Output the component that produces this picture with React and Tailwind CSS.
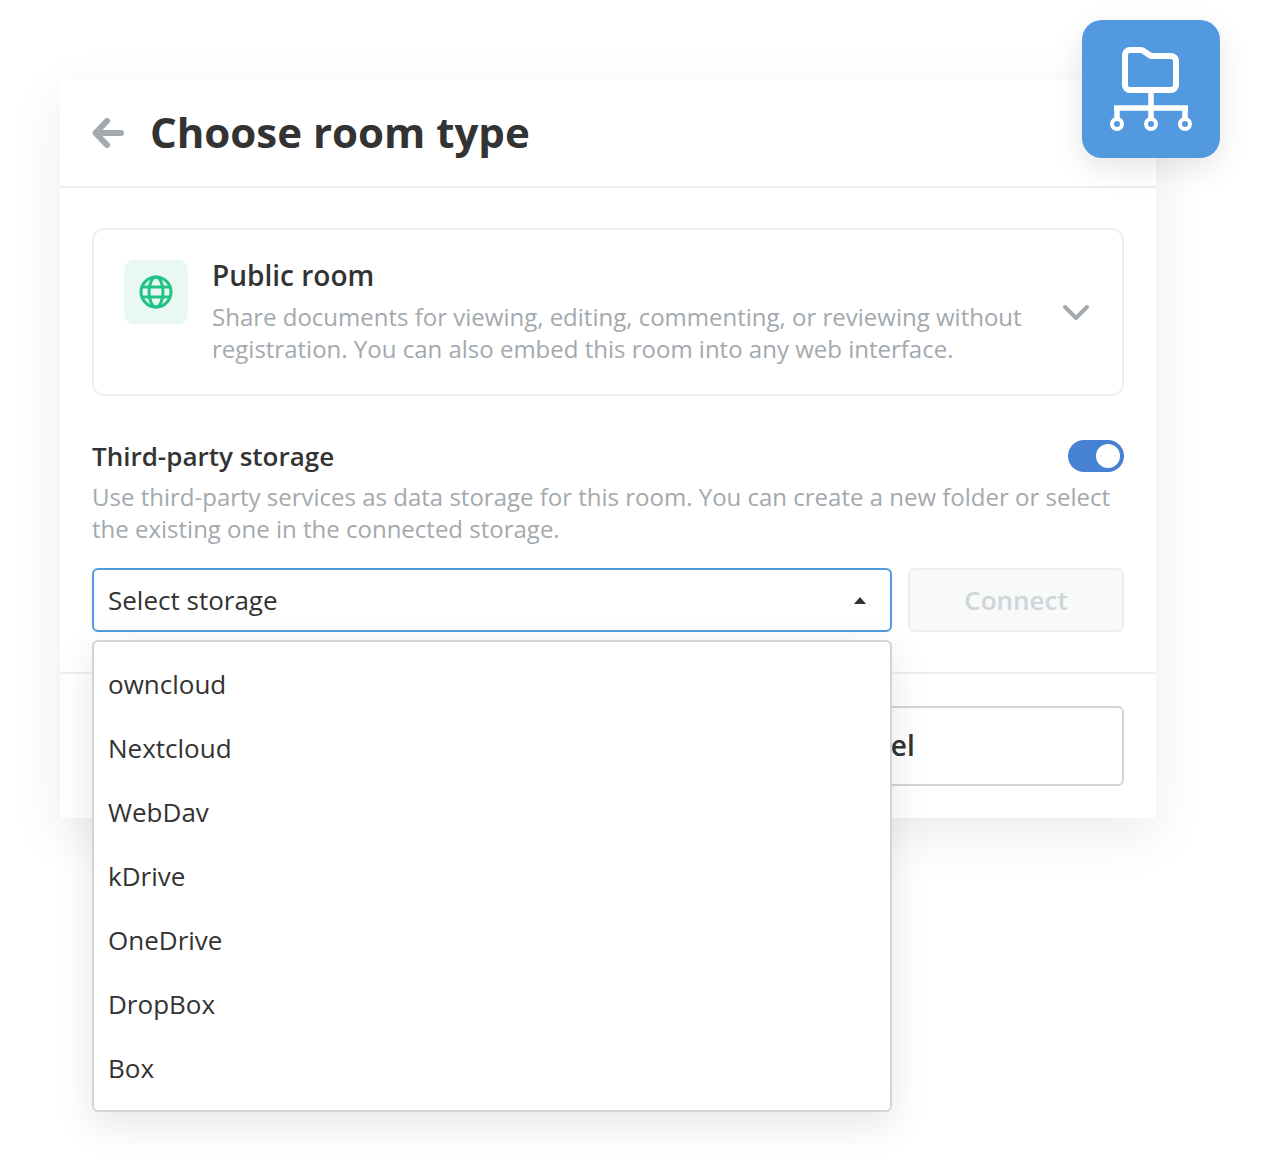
const STORAGES = ["owncloud", "Nextcloud", "WebDav", "kDrive", "OneDrive", "DropBox", "Box"];

function RoomIcon() {
  return (
    <svg width="138" height="138" viewBox="0 0 138 138" fill="none" stroke="white">
      <path strokeWidth="6" strokeLinejoin="round" d="M48 30h11a4 4 0 0 1 2.500.9L69 36h20a5 5 0 0 1 5 5v24a5 5 0 0 1-5 5H48a5 5 0 0 1-5-5V35a5 5 0 0 1 5-5z" />
      <path strokeWidth="5.500" d="M69 70v28M32 88h74M35 88v10M103 88v10" />
      <circle cx="35" cy="104" r="5" strokeWidth="4" />
      <circle cx="69" cy="104" r="5" strokeWidth="4" />
      <circle cx="103" cy="104" r="5" strokeWidth="4" />
    </svg>
  );
}

function App() {
  return (
    <div className="relative h-[1172px] w-full bg-white pl-[60px] pt-[80px] font-['Open_Sans',sans-serif] text-[#333]">
      <div className="w-[1096px] bg-white shadow-[0_16px_50px_rgba(0,0,0,0.08)]">
        <div className="flex h-[108px] items-center gap-[26px] border-b-2 border-[#eceef1] pb-[2px] pl-[32px]">
          <svg width="32" height="32" viewBox="0 0 32 32" fill="none" stroke="#a3a9ae" strokeWidth="6" strokeLinecap="round" strokeLinejoin="round">
            <path d="M29 17H4M15 5 3.500 17 15 29" />
          </svg>
          <h1 className="text-[42px] font-bold leading-none">Choose room type</h1>
        </div>

        <div className="px-[32px] pt-[40px]">
          <div className="flex items-center rounded-[12px] border-2 border-[#eceef1] pb-[29px] pl-[30px] pr-[32px] pt-[30px]">
            <div className="flex h-[64px] w-[64px] shrink-0 items-center justify-center self-start rounded-[10px] bg-[#e9f8f3]">
              <svg width="34" height="34" viewBox="0 0 34 34" fill="none" stroke="#22c386" strokeWidth="3">
                <circle cx="17" cy="17" r="15" />
                <ellipse cx="17" cy="17" rx="7" ry="15" />
                <path d="M3 12h28M3 22h28" />
              </svg>
            </div>
            <div className="-mt-[1px] ml-[24px] min-w-0 flex-1">
              <div className="text-[28px] font-semibold leading-[32px]">Public room</div>
              <p className="mt-[10px] w-[830px] text-[24px] leading-[32px] text-[#a3a9ae]">
                Share documents for viewing, editing, commenting, or reviewing without registration. You can also embed this room into any web interface.
              </p>
            </div>
            <svg width="28" height="18" viewBox="0 0 28 18" fill="none" stroke="#a3a9ae" strokeWidth="4" strokeLinecap="round" strokeLinejoin="round">
              <path d="M3 3l11 11L25 3" />
            </svg>
          </div>

          <div className="mt-[44px] flex items-center justify-between">
            <div className="text-[26px] font-semibold leading-[32px]">Third-party storage</div>
            <div className="flex h-[32px] w-[56px] items-center justify-end rounded-full bg-[#4781d1] pr-[4px]">
              <div className="h-[24px] w-[24px] rounded-full bg-white" />
            </div>
          </div>
          <p className="mt-[9px] text-[24px] leading-[32px] text-[#a3a9ae]">
            Use third-party services as data storage for this room. You can create a new folder or select the existing one in the connected storage.
          </p>

          <div className="relative mt-[23px] flex gap-[16px] pb-[40px]">
            <div className="flex h-[64px] w-[800px] items-center justify-between rounded-[6px] border-2 border-[#5299e0] pl-[14px] pr-[24px] text-[26px]">
              <span>Select storage</span>
              <div className="h-0 w-0 border-x-[6px] border-b-[7px] border-x-transparent border-b-[#333]" />
            </div>
            <div className="flex h-[64px] flex-1 items-center justify-center rounded-[6px] border-2 border-[#eceef1] bg-[#f8f9f9] text-[26px] font-semibold text-[#d0d5da]">
              Connect
            </div>

            <ul className="absolute left-0 top-[72px] z-10 w-[800px] rounded-[6px] border-2 border-[#d0d5da] bg-white py-[10px] shadow-[0_12px_40px_rgba(0,0,0,0.10)]">
              {STORAGES.map((name) => (
                <li key={name} className="flex h-[64px] items-center pl-[14px] text-[26px]">{name}</li>
              ))}
            </ul>
          </div>
        </div>

        <div className="grid grid-cols-2 gap-[16px] border-t-2 border-[#eceef1] p-[32px]">
          <div className="flex h-[80px] items-center justify-center rounded-[6px] bg-[#4781d1] text-[28px] font-semibold text-white">Save</div>
          <div className="flex h-[80px] items-center justify-center rounded-[6px] border-2 border-[#d0d5da] pb-[2px] text-[28px] font-semibold">Cancel</div>
        </div>
      </div>

      <div className="absolute left-[1082px] top-[20px] h-[138px] w-[138px] rounded-[20px] bg-[#5299e0] shadow-[0_10px_30px_rgba(0,0,0,0.10)]">
        <RoomIcon />
      </div>
    </div>
  );
}

export default App;
